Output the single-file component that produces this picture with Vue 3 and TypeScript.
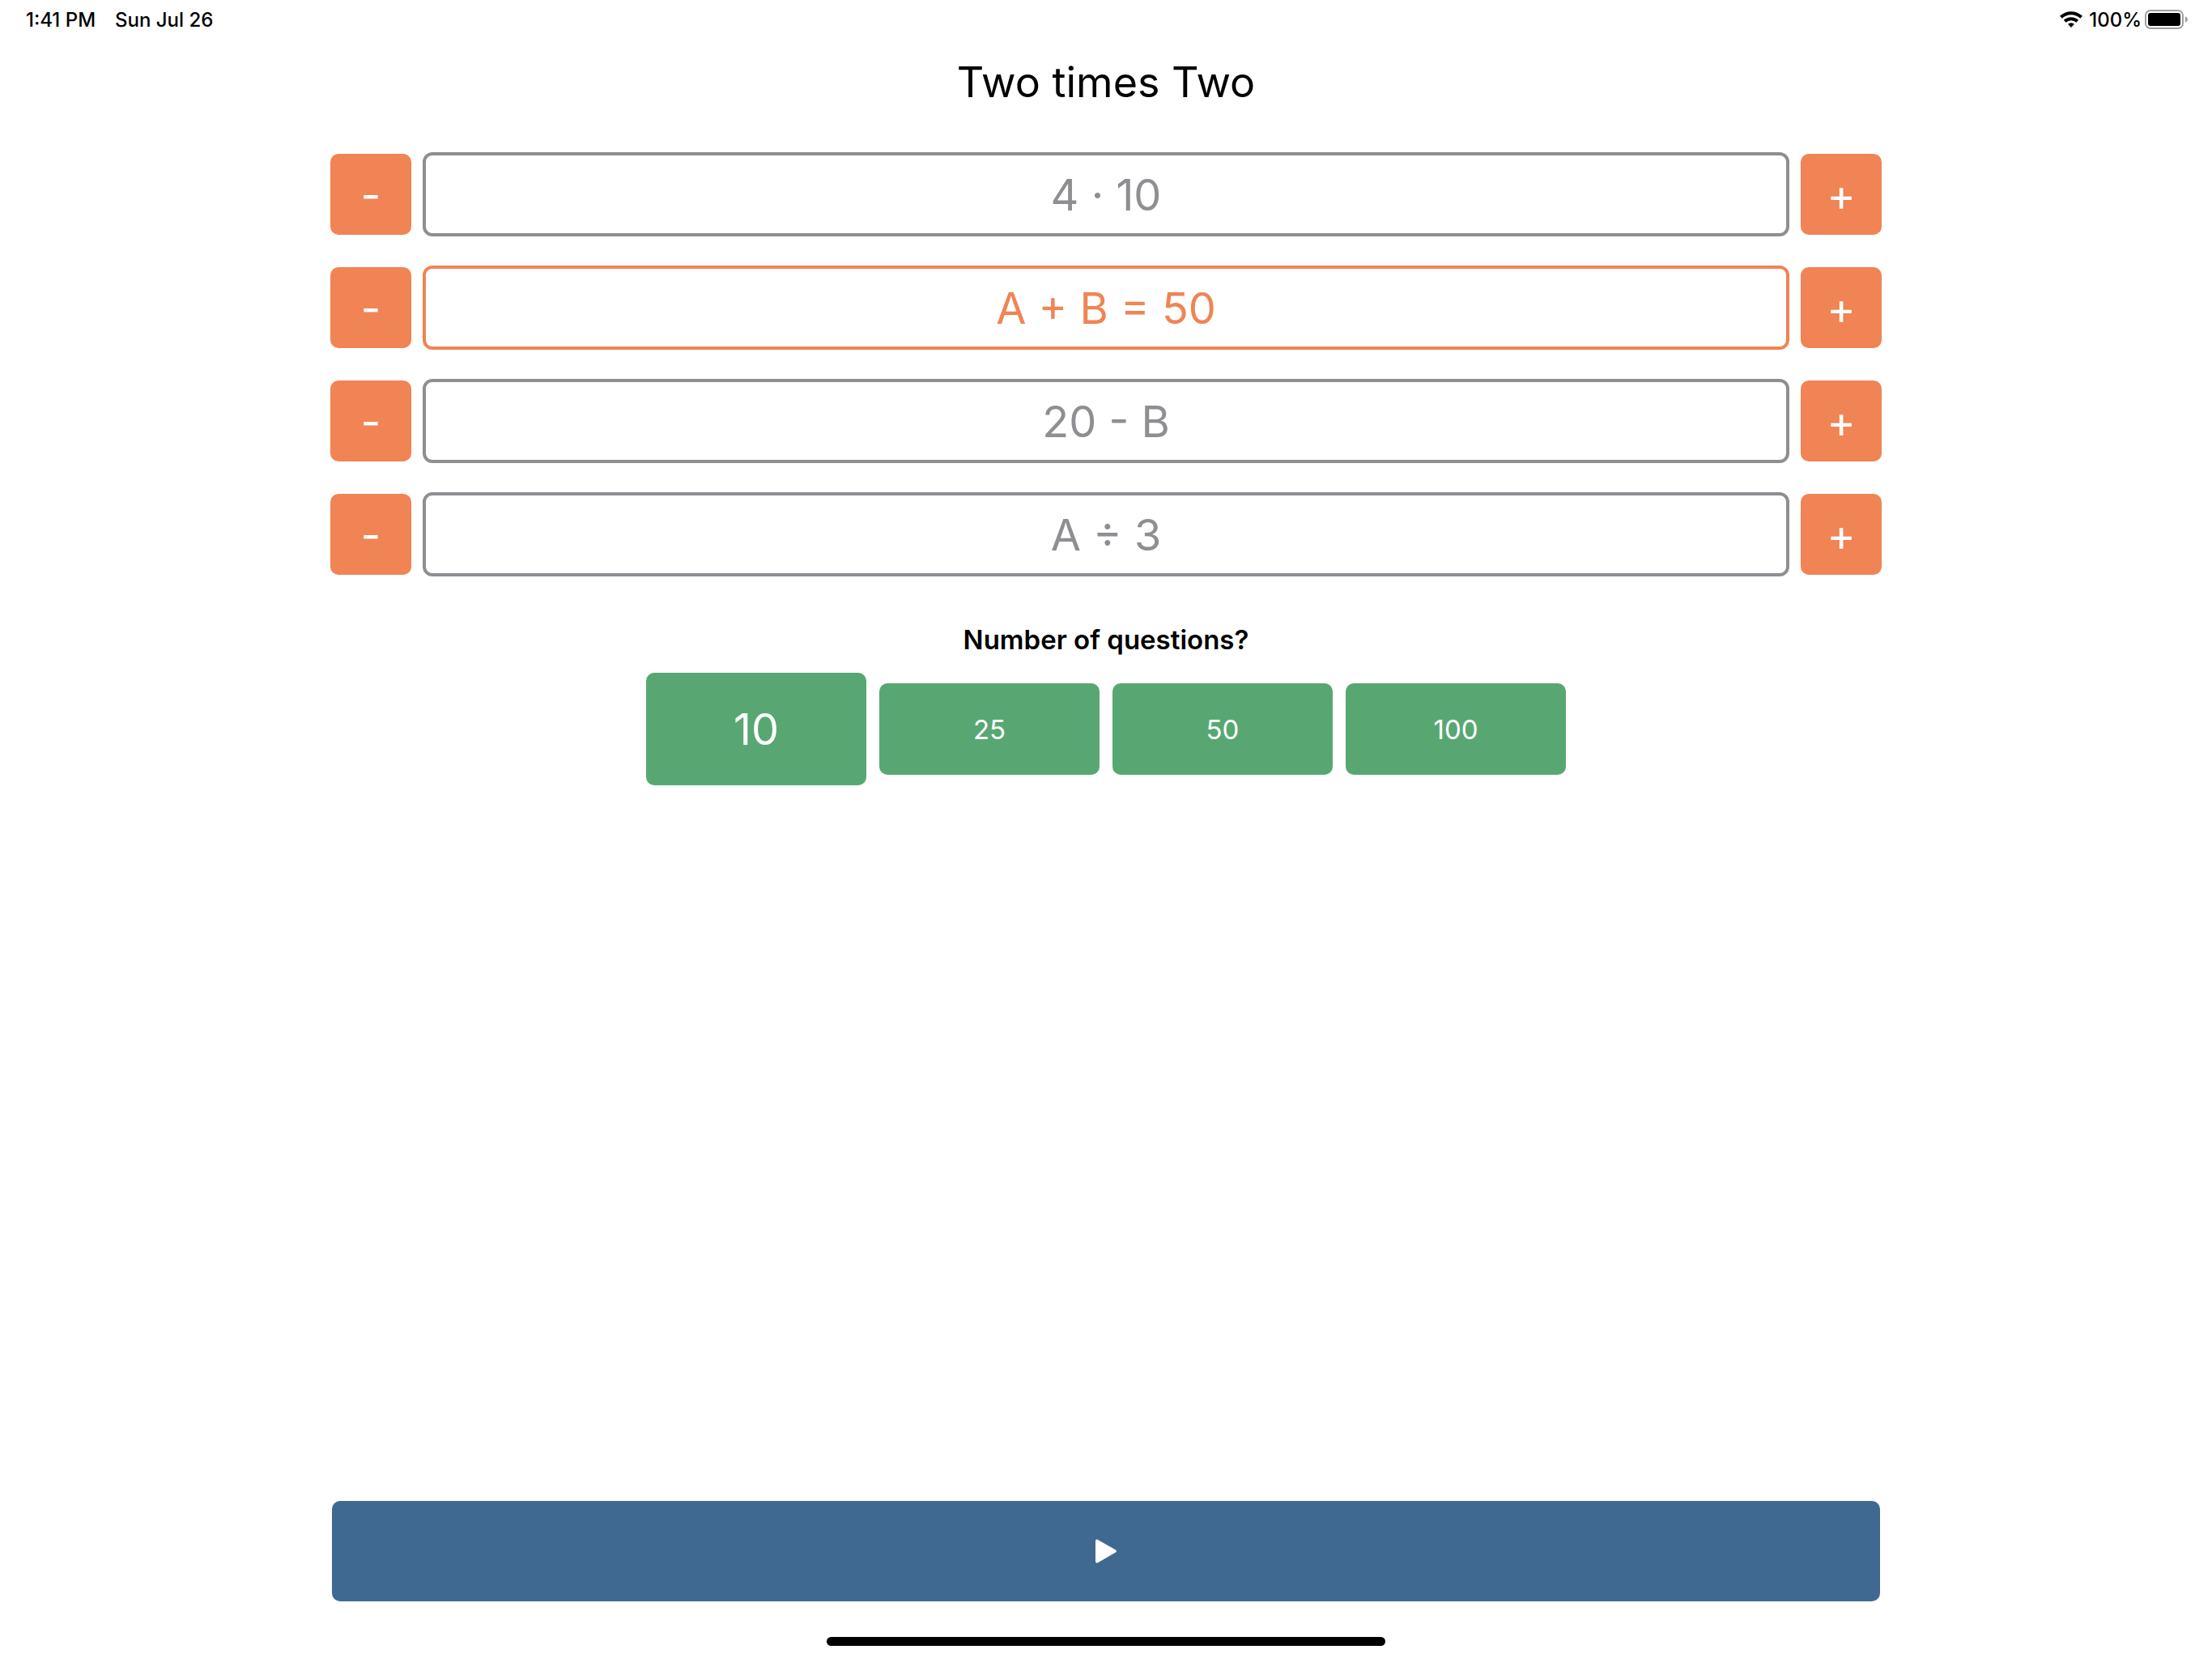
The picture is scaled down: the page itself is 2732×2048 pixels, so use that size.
<script setup lang="ts">
import { ref } from 'vue'

interface Exercise {
  id: string
  label: string
}

const exercises: Exercise[] = [
  { id: 'multiply', label: '4 · 10' },
  { id: 'add', label: 'A + B = 50' },
  { id: 'subtract', label: '20 - B' },
  { id: 'divide', label: 'A ÷ 3' },
]
const counts: number[] = [10, 25, 50, 100]

const selectedExercise = ref('add')
const selectedCount = ref(10)
</script>

<template>
  <div class="screen">
    <header class="status">
      <div class="status-group times">
        <span>1:41 PM</span>
        <span>Sun Jul 26</span>
      </div>
      <div class="status-group">
        <svg class="wifi" viewBox="0 0 28 20" width="28" height="20" aria-hidden="true">
          <g fill="none" stroke="#000" stroke-width="4">
            <path d="M1.4 7.3a18 18 0 0 1 25.2 0" />
            <path d="M6.2 12.3a11.2 11.2 0 0 1 15.6 0" />
          </g>
          <path d="M14 20l-4-4.2a5.8 5.8 0 0 1 8 0z" />
        </svg>
        <span>100%</span>
        <svg class="battery" viewBox="0 0 53 24" width="53" height="24" aria-hidden="true">
          <rect x="1" y="1" width="46" height="22" rx="6" fill="none" stroke="#a0a0a0" stroke-width="2" />
          <rect x="4" y="4" width="40" height="16" rx="3" />
          <path d="M50 8q3 1.5 3 4t-3 4z" fill="#a0a0a0" />
        </svg>
      </div>
    </header>

    <main class="content">
      <h1>Two times Two</h1>

      <div class="exercises">
        <div v-for="item in exercises" :key="item.id" class="row">
          <button type="button" class="step" :aria-label="`Decrease ${item.label}`">-</button>
          <button
            type="button"
            class="exercise"
            :class="{ active: item.id === selectedExercise }"
            :aria-pressed="item.id === selectedExercise"
            @click="selectedExercise = item.id"
          >{{ item.label }}</button>
          <button type="button" class="step" :aria-label="`Increase ${item.label}`">+</button>
        </div>
      </div>

      <h2 id="count-title">Number of questions?</h2>
      <div class="counts" role="group" aria-labelledby="count-title">
        <button
          v-for="count in counts"
          :key="count"
          type="button"
          class="count"
          :class="{ active: count === selectedCount }"
          :aria-pressed="count === selectedCount"
          @click="selectedCount = count"
        >{{ count }}</button>
      </div>

      <button type="button" class="play" aria-label="Start">
        <svg viewBox="0 0 26 30" width="26" height="30" aria-hidden="true">
          <path d="M0 2.8Q0 -.2 3 .9L25 13.6Q27 15.1 25 16.6L3 29.3Q0 30.6 0 27.6z" fill="#fff" />
        </svg>
      </button>
    </main>

    <div class="home-bar"></div>
  </div>
</template>

<style>
body {
  background: #fff;
}
</style>

<style scoped>
.screen {
  display: flex;
  flex-direction: column;
  min-height: 100vh;
  font-family: Inter, "Liberation Sans", sans-serif;
  color: #000;
}

button {
  padding: 0;
  border: 0;
  font: inherit;
  color: #fff;
  border-radius: 10px;
  cursor: pointer;
}

.status {
  display: flex;
  justify-content: space-between;
  height: 48px;
  padding: 0 30px 0 32px;
  font-size: 24px;
  font-weight: 500;
}

.status-group {
  display: flex;
  align-items: center;
}

.times {
  gap: 24px;
}

.wifi {
  margin-right: 8px;
}

.battery {
  margin-left: 4px;
}

.content {
  flex: 1;
  display: flex;
  flex-direction: column;
  width: 70%;
  margin: 0 auto;
}

h1 {
  margin: 20px 0 52px;
  font-size: 52px;
  font-weight: 400;
  line-height: 68px;
  text-align: center;
}

.exercises {
  display: flex;
  flex-direction: column;
  gap: 36px;
  margin: 0 -2px;
}

.row {
  display: flex;
  align-items: center;
  gap: 14px;
}

.step,
.exercise {
  font-size: 54px;
}

.step {
  width: 100px;
  height: 100px;
  background: #f08454;
}

.exercise {
  flex: 1;
  height: 104px;
  border: 4px solid #8e8e93;
  border-radius: 12px;
  background: #fff;
  color: #8e8e93;
}

.exercise.active {
  border-color: #f08454;
  color: #f08454;
}

h2 {
  margin: 58px 0 21px;
  font-size: 33px;
  font-weight: 600;
  line-height: 40px;
  text-align: center;
}

.counts {
  display: flex;
  justify-content: center;
  align-items: center;
  gap: 16px;
}

.count {
  width: 272px;
  height: 113px;
  background: #58a773;
  font-size: 33px;
}

.count.active {
  height: 139px;
  font-size: 54px;
}

.play {
  display: flex;
  align-items: center;
  justify-content: center;
  height: 124px;
  margin-top: auto;
  background: #3f6990;
}

.home-bar {
  width: 690px;
  height: 11px;
  margin: 44px auto 15px;
  border-radius: 6px;
  background: #000;
}
</style>
